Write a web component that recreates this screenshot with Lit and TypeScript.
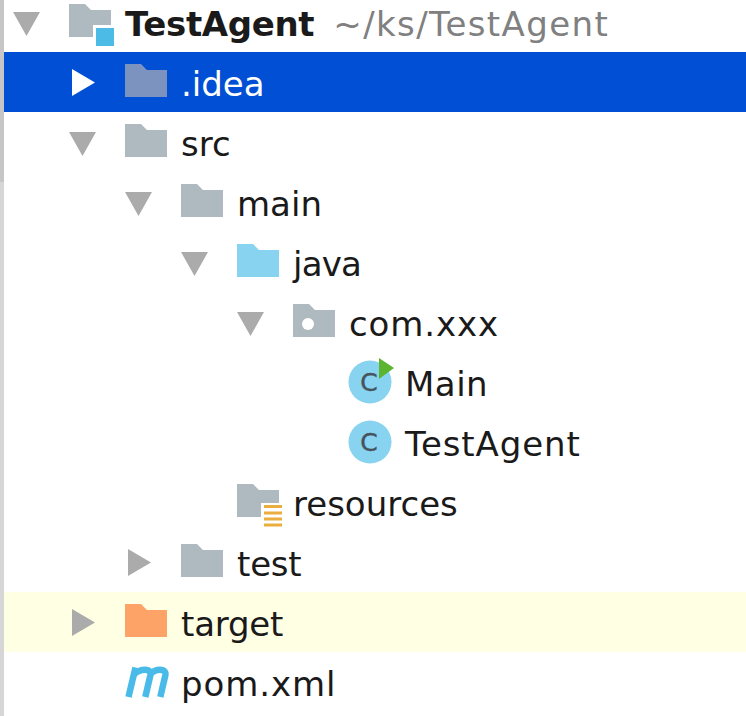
import { LitElement, css, html, svg } from 'lit'
import { customElement } from 'lit/decorators.js'

interface Row {
  level: number
  arrow: 'down' | 'right' | 'none'
  icon: string
  label: string
  hint?: string
  kind?: string
  // per label letter spacing, the reference font is not available here
  track?: number
}

const ROWS: Row[] = [
  { level: 0, arrow: 'down', icon: 'project', label: 'TestAgent', hint: '~/ks/TestAgent', kind: 'root', track: -0.35 },
  { level: 1, arrow: 'right', icon: 'excluded', label: '.idea', kind: 'selected' },
  { level: 1, arrow: 'down', icon: 'folder', label: 'src' },
  { level: 2, arrow: 'down', icon: 'folder', label: 'main' },
  { level: 3, arrow: 'down', icon: 'source', label: 'java', track: -0.8 },
  { level: 4, arrow: 'down', icon: 'package', label: 'com.xxx', track: 0.9 },
  { level: 5, arrow: 'none', icon: 'main', label: 'Main', track: 0.5 },
  { level: 5, arrow: 'none', icon: 'cls', label: 'TestAgent', track: 0.9 },
  { level: 3, arrow: 'none', icon: 'res', label: 'resources' },
  { level: 2, arrow: 'right', icon: 'folder', label: 'test', track: -0.2 },
  { level: 1, arrow: 'right', icon: 'target', label: 'target', kind: 'ignored', track: -0.2 },
  { level: 1, arrow: 'none', icon: 'maven', label: 'pom.xml', track: 0.9 },
]

const FOLDER = 'M0 1H16L22 7H42V34H0Z'

function folder(fill: string) {
  return svg`<path d=${FOLDER} fill=${fill}></path>`
}

function classIcon() {
  return svg`
    <circle cx="21" cy="19" r="21.5" fill="#87d3f0"></circle>
    <text class="letter" x="20" y="28" text-anchor="middle">C</text>
  `
}

function iconBody(icon: string, selected: boolean) {
  switch (icon) {
    case 'project':
      return svg`
        ${folder('#afb9c0')}
        <rect x="24" y="22" width="22" height="22" fill="#fff"></rect>
        <rect x="27" y="25" width="18" height="18" fill="#4cbbe6"></rect>
      `
    case 'excluded':
      return folder(selected ? '#7b93be' : '#afb9c0')
    case 'source':
      return folder('#87d3f0')
    case 'target':
      return folder('#fda368')
    case 'package':
      return svg`${folder('#afb9c0')}<circle cx="15" cy="21" r="6" fill="#fff"></circle>`
    case 'res':
      return svg`
        ${folder('#afb9c0')}
        <rect x="24" y="20" width="22" height="24" fill="#fff"></rect>
        <rect x="27" y="22" width="18" height="3" fill="#eaae3e"></rect>
        <rect x="27" y="28.500" width="18" height="3" fill="#eaae3e"></rect>
        <rect x="27" y="34.500" width="18" height="3" fill="#eaae3e"></rect>
        <rect x="27" y="40.500" width="18" height="3" fill="#eaae3e"></rect>
      `
    case 'cls':
      return classIcon()
    case 'main':
      return svg`
        ${classIcon()}
        <path d="M30 -5L45 5L30 16Z" fill="#5cb531"></path>
      `
    case 'maven':
      return svg`
        <g fill="none" stroke="#4abbe8" stroke-width="6.500">
          <path d="M3.500 34L10.500 4.500"></path>
          <path d="M9 11.500C12.500 8 16 6.800 20 6.800C24.500 6.800 26 9 25.300 12.500L20.300 34"></path>
          <path d="M25 11.500C28 8 31.500 6.800 35 6.800C39.500 6.800 41 9 40.300 12.500L35.300 34"></path>
        </g>
      `
    default:
      return folder('#afb9c0')
  }
}

@customElement('app-root')
export class AppRoot extends LitElement {
  static styles = css`
    :host {
      display: block;
      width: 746px;
      height: 716px;
      overflow: hidden;
      box-sizing: border-box;
      padding-left: 4px;
      background: linear-gradient(#c6c6c6 182px, #d6d6d6 182px) left top / 4px 100% no-repeat #fff;
      font-family: 'DejaVu Sans', sans-serif;
      font-size: 34px;
      color: #1a1a1a;
    }

    .row {
      display: flex;
      align-items: center;
      height: 60px;
      box-sizing: border-box;
      white-space: nowrap;
    }

    .row.root {
      height: 52px;
      padding-bottom: 8px;
    }

    .row.selected {
      background: #004fd4;
      color: #fff;
    }

    .row.ignored {
      background: #ffffe4;
    }

    .cell {
      flex: none;
      width: 56px;
      display: flex;
      align-items: center;
    }

    svg {
      display: block;
      overflow: visible;
    }

    .letter {
      font-family: 'DejaVu Sans', sans-serif;
      font-size: 25px;
      fill: #46525c;
      stroke: #46525c;
      stroke-width: 0.4px;
    }

    .label {
      padding-top: 3px;
    }

    .label.root {
      font-weight: 700;
    }

    .hint {
      margin-left: 19px;
      padding-top: 3px;
      letter-spacing: 1.4px;
      color: #808080;
    }
  `

  private arrow(row: Row) {
    if (row.arrow === 'none') return null
    const points = row.arrow === 'down' ? '0,4 27,4 13.5,28' : '3,1 26,14.500 3,28'
    return html`<svg width="27" height="28" viewBox="0 0 27 28">
      <polygon points=${points} fill=${row.kind === 'selected' ? '#fff' : '#ababab'}></polygon>
    </svg>`
  }

  render() {
    return html`
      ${ROWS.map((row) => html`
        <div class="row ${row.kind ?? ''}" style="padding-left: ${row.level * 56 + 9}px">
          <div class="cell">${this.arrow(row)}</div>
          <div class="cell">
            <svg width="42" height="38" viewBox="0 0 42 38">${iconBody(row.icon, row.kind === 'selected')}</svg>
          </div>
          <span class="label ${row.kind ?? ''}" style="letter-spacing: ${row.track ?? 0}px">${row.label}</span>
          ${row.hint ? html`<span class="hint">${row.hint}</span>` : null}
        </div>
      `)}
    `
  }
}
